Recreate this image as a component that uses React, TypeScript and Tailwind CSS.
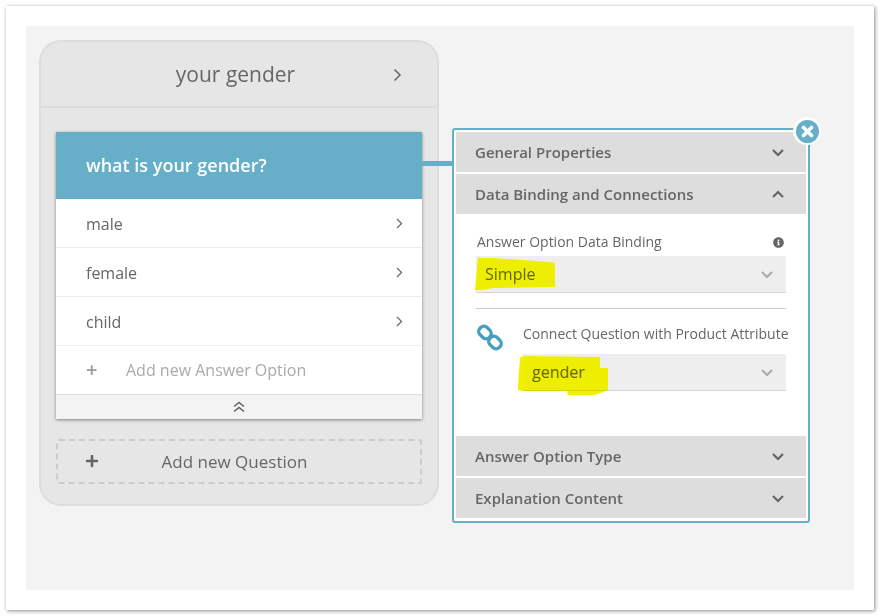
import React from 'react'
import { FaInfoCircle, FaPlus } from 'react-icons/fa'

const font = { fontFamily: '"Open Sans", sans-serif' }

const Chevron = ({ up = false, className = '' }: { up?: boolean; className?: string }) => (
  <svg width="14" height="9" viewBox="0 0 14 9" fill="none" className={className}>
    <path d={up ? 'M2 7 L7 2 L12 7' : 'M2 2 L7 7 L12 2'} stroke="currentColor" strokeWidth="2.2" />
  </svg>
)

const Angle = () => (
  <svg width="7" height="11" viewBox="0 0 7 11" fill="none">
    <path d="M1 1 L5.5 5.5 L1 10" stroke="#6b6b6b" strokeWidth="1.3" />
  </svg>
)

const Section = ({ title, up = false }: { title: string; up?: boolean }) => (
  <div className="h-10 shrink-0 bg-[#dddddd] flex items-center justify-between pl-[19px] pr-[21px] text-[#666666]">
    <span className="text-[15px] font-semibold leading-none">{title}</span>
    <Chevron up={up} />
  </div>
)

const Answer = ({ label }: { label: string }) => (
  <div className="h-[49px] pt-px border-b border-[#eeeeee] flex items-center justify-between pl-[30px] pr-[19px] text-[16px] text-[#666666]">
    <span>{label}</span>
    <Angle />
  </div>
)

const SelectBox = ({ value, children }: { value: string; children: React.ReactNode }) => (
  <div className="relative h-[37px] bg-[#eeeeee] border-b border-[#d5d5d5] flex items-center justify-between pl-[9px] pr-3 text-[16px] text-[#666666]">
    <span>{value}</span>
    <Chevron className="text-[#aaaaaa]" />
    {children}
  </div>
)

export default function App() {
  return (
    <div className="w-[880px] h-[616px] bg-white p-[6px]" style={font}>
      <div className="h-[604px] bg-white p-5 shadow-[1px_1px_4px_rgba(0,0,0,0.45)]">
        <div className="h-[564px] bg-[#f3f3f3] flex items-start pt-[14px] pl-[13px]">
          <div className="w-[400px] h-[466px] bg-[#e6e6e6] border-2 border-[#dddddd] rounded-[22px] shrink-0">
            <div className="h-[66px] pt-[2px] border-b-2 border-[#dddddd] relative flex items-center justify-center pr-[7px] text-[21px] text-[#666666]">
              your gender
              <div className="absolute right-[35px] top-[26px]">
                <svg width="9" height="14" viewBox="0 0 9 14" fill="none">
                  <path d="M1.5 1.5 L7 7 L1.5 12.5" stroke="#666666" strokeWidth="1.5" />
                </svg>
              </div>
            </div>
            <div className="pl-[15px] pr-[15px] pt-[24px]">
              <div className="relative bg-white shadow-[0_1px_3px_rgba(0,0,0,0.45)]">
                <div className="h-[67px] bg-[#67aec9] flex items-center pl-[30px] text-white text-[18px] font-semibold">
                  what is your gender?
                </div>
                <div className="absolute left-full top-[29px] w-[30px] h-[5px] bg-[#67aec9]" />
                <Answer label="male" />
                <Answer label="female" />
                <Answer label="child" />
                <div className="h-[48px] flex items-center pl-[30px] text-[16px] text-[#aaaaaa]">
                  <span className="w-10 text-[#999999] text-[20px] font-semibold">+</span>
                  <span>Add new Answer Option</span>
                </div>
                <div className="h-[25px] bg-[#f3f3f3] border-t border-[#dddddd] flex items-center justify-center">
                  <svg width="12" height="12" viewBox="0 0 12 12" fill="none">
                    <path d="M1 5.5 L6 1.5 L11 5.5 M1 10.5 L6 6.5 L11 10.5" stroke="#5f5f5f" strokeWidth="1.5" />
                  </svg>
                </div>
              </div>
              <div className="mt-[20px] h-[45px] border-2 border-dashed border-[#cccccc] rounded-[3px] relative flex items-center justify-center text-[17px] text-[#666666]">
                <FaPlus size={14} className="absolute left-[27px] top-[13px]" />
                <span className="pr-[9px]">Add new Question</span>
              </div>
            </div>
          </div>
          <div className="relative ml-[13px] mt-[88px] w-[358px] h-[395px] bg-white border-2 border-[#67aec9] rounded-[3px] p-[2px] flex flex-col gap-[2px] shrink-0">
            <div className="absolute -right-[13px] -top-[13px] w-[28px] h-[28px] rounded-full bg-white flex items-center justify-center">
              <div className="w-[23px] h-[23px] rounded-full bg-[#67aec9] flex items-center justify-center">
                <svg width="13" height="13" viewBox="0 0 13 13" fill="none">
                  <path d="M2.5 2.5 L10.5 10.5 M10.5 2.5 L2.5 10.5" stroke="white" strokeWidth="3.6" strokeLinecap="round" />
                </svg>
              </div>
            </div>
            <Section title="General Properties" />
            <Section title="Data Binding and Connections" up />
            <div className="h-[218px] shrink-0 pl-[20px] pr-[20px] pt-[16px]">
              <div className="flex items-center justify-between pl-[1px] pr-[2px] text-[14px] leading-5 text-[#666666]">
                <span>Answer Option Data Binding</span>
                <FaInfoCircle size={11} />
              </div>
              <div className="mt-[4px]">
                <SelectBox value="Simple">
                  <svg width="80" height="33" viewBox="0 0 80 33" className="absolute left-[-1px] top-[2px] mix-blend-darken">
                    <path d="M0 32 L3 0 L18 0 L75 4 L80 5 L80 29 L18 30 L8 32 Z" fill="#f0f000" />
                  </svg>
                </SelectBox>
              </div>
              <div className="mt-[15px] border-t border-[#cccccc] pt-[15px] flex items-start">
                <svg width="28" height="28" viewBox="0 0 28 28" fill="none" className="mr-[19px] mt-[-1px] shrink-0">
                  <rect x="2.5" y="4.5" width="13" height="10" rx="4.5" transform="rotate(45 9 9.5)" stroke="#46a0bd" strokeWidth="3.4" />
                  <rect x="12.5" y="14.5" width="13" height="10" rx="4.5" transform="rotate(45 19 19.5)" stroke="#46a0bd" strokeWidth="3.4" />
                </svg>
                <div className="flex-1 min-w-0">
                  <div className="text-[14px] leading-5 text-[#666666] whitespace-nowrap">Connect Question with Product Attribute</div>
                </div>
              </div>
              <div className="mt-[3px] ml-[47px]">
                <SelectBox value="gender">
                  <svg width="90" height="39" viewBox="0 0 90 39" className="absolute left-[-5px] top-[2px] mix-blend-darken">
                    <path d="M0 29 L2 2 L5 0 L82 1 L82 12 L90 12 L90 34 L77 39 L50 39 L49 35 L5 35 L0 34 Z" fill="#f0f000" />
                  </svg>
                </SelectBox>
              </div>
            </div>
            <Section title="Answer Option Type" />
            <Section title="Explanation Content" />
          </div>
        </div>
      </div>
    </div>
  )
}
